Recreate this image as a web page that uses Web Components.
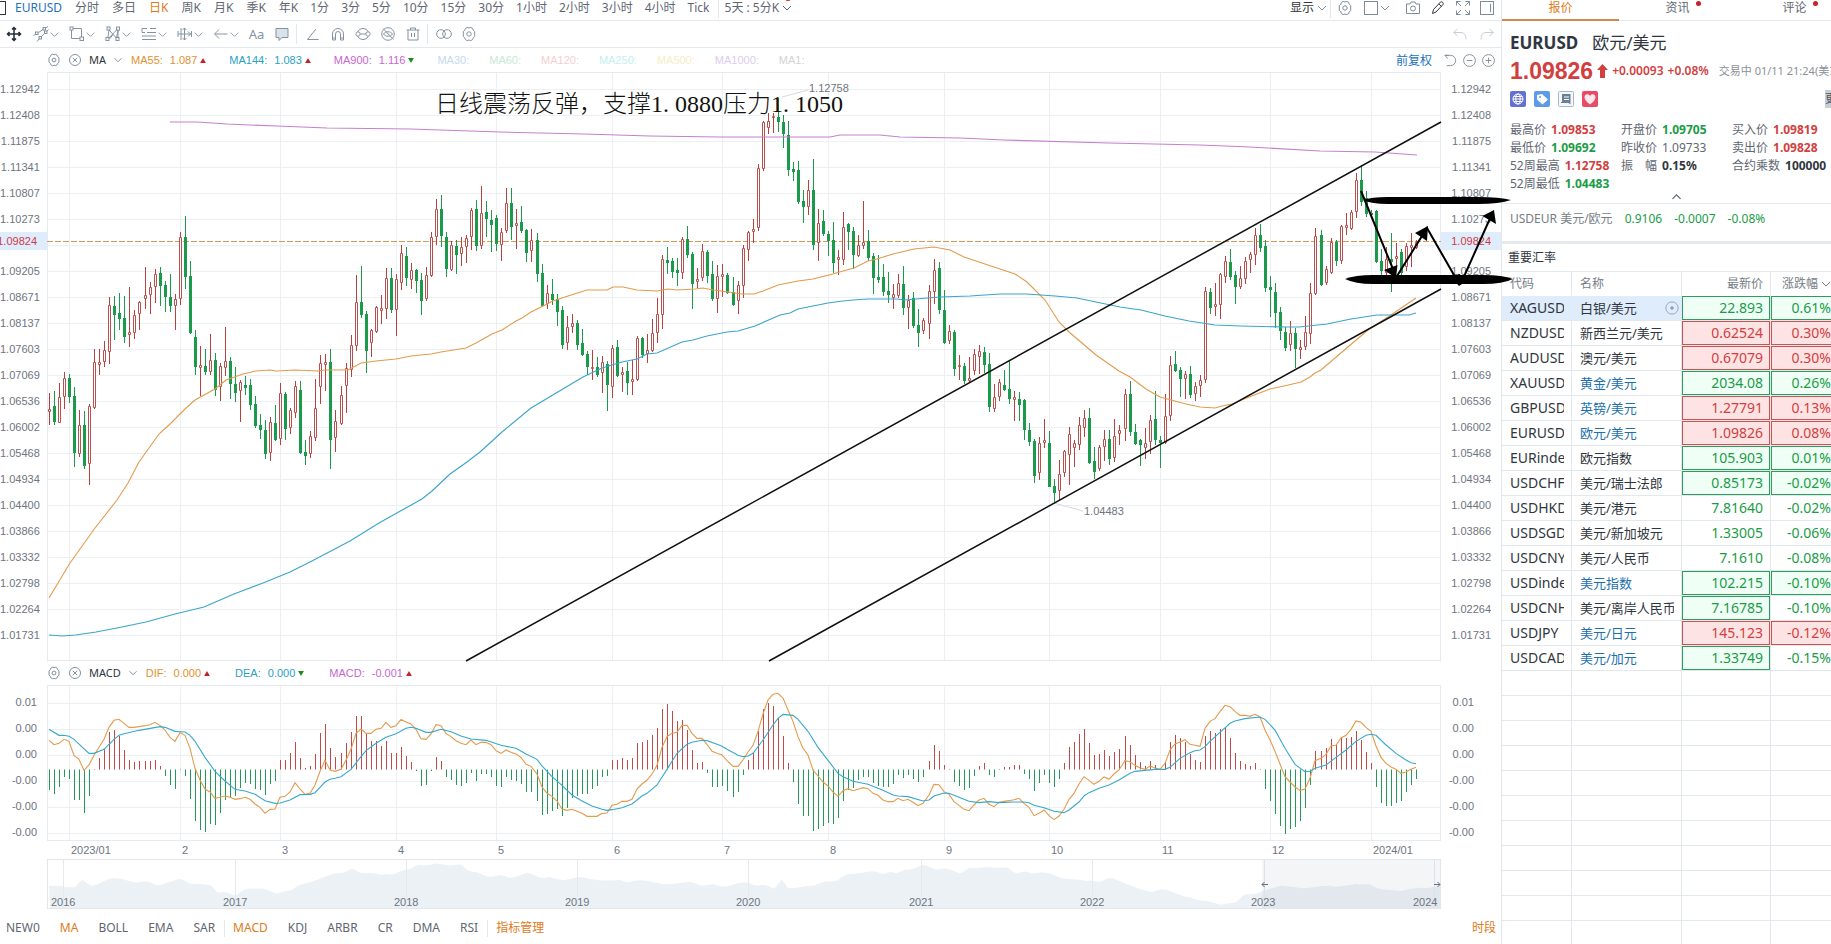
<!DOCTYPE html>
<html lang="zh-CN">
<head>
<meta charset="utf-8">
<title>EURUSD 欧元/美元</title>
<style>
html, body { margin: 0; height: 100%; }
body {
  font: 12px/16px "Noto Sans", "Noto Sans CJK SC", sans-serif;
  color: #5f6773; background: #fff; overflow: hidden;
  --line: #e3e8ed; --grid: #edf0f3; --red: #d23f3f; --green: #1a9c46; --orange: #e07b1a; --blue: #2472bf; --dark: #2f3640;
}
</style>
</head>
<body>
<quote-app></quote-app>
<script>
const BASE = `
  *, *::before { box-sizing: border-box; }
  :host { display: block; }
  button { font: inherit; color: inherit; background: none; border: 0; padding: 0; margin: 0; display: inline-flex; align-items: center; justify-content: center; white-space: nowrap; cursor: pointer; }
`;
function define(name, css, html, init) {
  const tpl = document.createElement('template');
  tpl.innerHTML = `<style>${BASE}${css}</style>${html}`;
  customElements.define(name, class extends HTMLElement {
    constructor() {
      super();
      this.attachShadow({ mode: 'open' }).append(tpl.content.cloneNode(true));
    }
    connectedCallback() { if (init && !this.ready) { this.ready = true; init(this.shadowRoot, this); } }
  });
}

/* ---------- icons ---------- */
const GEAR = '<path d="M6.2 1.4Q8 2.600 9.800 1.400L11.600 2.400Q11.700 4.500 13.700 5.500V8Q13.700 9 13.700 10.500Q11.700 11.500 11.600 13.600L9.800 14.600Q8 13.400 6.200 14.600L4.400 13.600Q4.300 11.500 2.300 10.500V5.500Q4.300 4.500 4.400 2.400z"/><circle cx="8" cy="8" r="2.200"/>';
const ICONS = {
  gear: GEAR,
  close: '<circle cx="8" cy="8" r="6.3"/><path d="M5.5 5.5l5 5m0-5l-5 5"/>',
  move: '<path stroke-width="1.5" d="M8 1.5v13M1.5 8h13M6 3.5l2-2 2 2M6 12.5l2 2 2-2M3.5 6l-2 2 2 2M12.500 6l2 2-2 2"/>',
  lines: '<path d="M.5 9.500L3 8M5.500 6.500L10 3.500M12.500 2L15 .5M4 15.500L6.500 12.500M8.500 10.500L11.500 7.500M13.500 5.500L15.500 3.500"/><rect x="2.500" y="6" width="2.500" height="2.500"/><rect x="10" y="1.500" width="2.500" height="2.500"/><rect x="6" y="10.500" width="2.500" height="2.500"/><rect x="11.500" y="5" width="2.500" height="2.500"/>',
  rect: '<path d="M4 2.500h8.500v8.500M2.500 4v8.500H11"/><rect x="1" y="1" width="3" height="3"/><rect x="11" y="11" width="3.500" height="3.500"/>',
  pattern: '<path d="M3 11L4 4l7.500 8L13 4M3.500 12.500L11.500 4M13 4v8M5 12.500L8 8.500"/><rect x="2" y="1" width="3" height="3"/><rect x="11.500" y="1" width="3" height="3"/><rect x="1" y="11.500" width="3" height="3"/><rect x="11" y="11.500" width="3" height="3"/>',
  fib: '<path d="M1 2.500h5M9 2.500h6M1 2.500v4M6 6.500h9M1 10h14M1 13.500h14M1 6.500h3"/>',
  measure: '<path d="M4 2v12M14.500 5v6M7.500 2v12M1 8h13M1 5v6M11 5.500L13.500 8 11 10.500M5.500 4l2-2 2 2M5.500 12l2 2 2-2"/>',
  arrow: '<path d="M14.500 8H2M6 3.500L1.500 8 6 12.500"/>',
  bubble: '<path fill="#dbe3ea" d="M2 2.500h12v9H8l-3 3v-3H2z"/>',
  angle: '<path d="M13.500 13.500H2.500L11 3"/>',
  magnet: '<path d="M2.500 14V8a5.500 5.500 0 0 1 11 0v6h-3V8a2.500 2.500 0 0 0-5 0v6zM2.500 12h3M10.500 12h3"/>',
  link: '<path d="M2.500 6a6 6 0 0 1 11 0M13.500 10a6 6 0 0 1-11 0M5 8h6"/><rect x="1" y="6" width="4" height="4" rx="1.500"/><rect x="11" y="6" width="4" height="4" rx="1.500"/>',
  eye: '<circle cx="8" cy="8" r="6.300"/><path d="M3.500 8c2-3 7-3 9 0-2 3-7 3-9 0zM3 2.500l10.500 11"/>',
  trash: '<path d="M1.500 4h13M5.500 4V2h5v2M3 4v10h10V4M6.500 7v4M9.500 7v4"/>',
  rings: '<circle cx="5" cy="8" r="4.300"/><circle cx="11" cy="8" r="4.300"/>',
  square: '<rect x="1.500" y="1.500" width="13" height="13"/>',
  camera: '<path d="M1.500 4H5l1-2h4l1 2h3.500v9.500h-13z"/><circle cx="8" cy="8.500" r="2.500"/>',
  pencil: '<path stroke="#2f3640" d="M2.500 13.500l1-4L10.500 2c1-1 3.500 1 2.500 2.500L6 12z M9 4l2.500 2.500"/>',
  expand: '<path d="M1.500 5.500v-4h4M10.500 1.500h4v4M14.500 10.500v4h-4M5.500 14.500h-4v-4M1.500 1.500l4.500 4.500M14.500 1.500L10 6M14.500 14.500L10 10M1.500 14.500L6 10"/>',
  panel: '<rect x="1.500" y="1.500" width="13" height="13"/><path d="M11.500 4v8"/>',
  undo: '<path d="M5.500 3L1.500 6.500 5.500 10M2 6.500h7q5 0 5 7"/>',
  redo: '<path d="M10.500 3l4 3.500-4 3.500M14 6.500H7q-5 0-5 7"/>',
  reset: '<path d="M2 2.500h6a5.300 5.300 0 0 1 0 11H4M2 2.500h4M2 2.500l3 3.500"/>',
  minus: '<circle cx="8" cy="8" r="6.300"/><path d="M5 8h6"/>',
  plus: '<circle cx="8" cy="8" r="6.300"/><path d="M5 8h6M8 5v6"/>',
  chevron: '<path d="M4 6l4 4 4-4"/>',
  up: '<path stroke-width="1.500" d="M3 11L8 6l5 5"/>',
  target: '<circle cx="8" cy="8" r="7"/><circle cx="8" cy="8" r="1.500" fill="currentColor"/>',
  globe: '<rect width="16" height="16" rx="2" fill="#6470d2" stroke="none"/><g stroke="#fff"><circle cx="8" cy="8" r="5"/><ellipse cx="8" cy="8" rx="2.200" ry="5"/><path d="M3 8h10M4 5.500h8M4 10.500h8"/></g>',
  tag: '<rect width="16" height="16" rx="2" fill="#5b9be8" stroke="none"/><path fill="#fff" stroke="none" d="M3 4l5-1 6 5.500-5.500 5L3 8.500z"/><circle cx="6" cy="6" r="1" fill="#5b9be8" stroke="none"/>',
  note: '<rect x=".5" y=".5" width="15" height="15" rx="1" fill="#f5f8fa" stroke="#a9b8c6"/><path fill="#6b8096" stroke="none" d="M4 3h8.500v10.500L10.500 12H3V11h1z"/><path stroke="#fff" d="M6 6h5M6 8.500h5"/>',
  heart: '<rect width="16" height="16" rx="2" fill="#ea4a66" stroke="none"/><path fill="#fde9ec" stroke="none" d="M8 13.500C5 11 2.500 9 2.500 6.200 2.500 3 6.500 2.300 8 5c1.500-2.700 5.500-2 5.500 1.200C13.500 9 11 11 8 13.500z"/>'
};
define('ui-icon', `
  :host { display: inline-block; width: 16px; height: 16px; flex: none; }
  svg { display: block; width: 100%; height: 100%; fill: none; stroke: currentColor; }
`, '<svg viewBox="0 0 16 16" aria-hidden="true"></svg>', (root, el) => {
  root.querySelector('svg').innerHTML = ICONS[el.getAttribute('name')];
});

/* ---------- period tabs ---------- */
define('period-bar', `
  :host { height: 21px; border-bottom: 1px solid var(--line); display: flex; align-items: center; padding-bottom: 5px; }
  .box { width: 6px; height: 14px; border: 1px solid #2f3640; border-left: 0; margin-right: 9px; flex: none; }
  .tabs, .times { display: flex; gap: 13px; flex: none; }
  .times { gap: 12px; margin-left: 12px; }
  .sym { color: var(--blue); }
  .on { color: var(--orange); }
  .sep { width: 1px; height: 20px; background: var(--line); margin: 0 6px 0 8px; }
  .more { position: relative; }
  .dot { position: absolute; right: 4px; top: -5px; width: 6px; height: 6px; border-radius: 50%; background: #d8232a; }
  .right { margin-left: auto; display: flex; align-items: center; padding-right: 6px; color: #7f8b97; }
  .show { color: var(--dark); }
`, `
  <span class="box"></span>
  <nav class="tabs"></nav><nav class="times"></nav>
  <span class="sep"></span>
  <button class="more">5天 : 5分K<ui-icon name="chevron"></ui-icon><i class="dot"></i></button>
  <div class="right">
    <button class="show">显示</button><ui-icon name="chevron"></ui-icon><span class="sep" style="margin:0 6px 0 0"></span>
    <button aria-label="设置"><ui-icon name="gear"></ui-icon></button>
    <button aria-label="布局" style="margin-left:10px"><ui-icon name="square"></ui-icon></button><ui-icon name="chevron" style="margin:0 12px 0 -2px"></ui-icon>
    <button aria-label="截图" style="margin-right:9px"><ui-icon name="camera"></ui-icon></button>
    <button aria-label="画线" style="margin-right:9px"><ui-icon name="pencil"></ui-icon></button>
    <button aria-label="全屏" style="margin-right:8px"><ui-icon name="expand"></ui-icon></button>
    <button aria-label="侧栏"><ui-icon name="panel"></ui-icon></button>
  </div>`, root => {
  const fill = (sel, list) => {
    root.querySelector(sel).innerHTML = list.split(',').map(t => `<button class="${t === 'EURUSD' ? 'sym' : t === '日K' ? 'on' : ''}">${t}</button>`).join('');
  };
  fill('.tabs', 'EURUSD,分时,多日,日K,周K,月K,季K,年K');
  fill('.times', '1分,3分,5分,10分,15分,30分,1小时,2小时,3小时,4小时,Tick');
});

/* ---------- drawing tools ---------- */
define('draw-bar', `
  :host { height: 27px; border-bottom: 1px solid var(--line); display: flex; align-items: center; color: #8593a1; padding-left: 6px; }
  .move { color: #222b36; margin-right: 11px; }
  .grp { width: 36px; justify-content: flex-start; }
  .grp ui-icon + ui-icon { margin-left: -2px; width: 15px; height: 15px; }
  .one { width: 25px; }
  .text { margin-left: -5px; font-size: 13px; }
  .sep { width: 1px; height: 20px; background: var(--line); margin: 0 3px 0 2px; }
  .hist { margin-left: auto; display: flex; gap: 11px; padding-right: 6px; color: #c9ced4; }
`, `
  <button class="move" aria-label="移动"><ui-icon name="move"></ui-icon></button>
  ${['lines', 'rect', 'pattern', 'fib', 'measure', 'arrow'].map(n => `<button class="grp" aria-label="${n}"><ui-icon name="${n}"></ui-icon><ui-icon name="chevron"></ui-icon></button>`).join('')}
  <button class="one text">Aa</button>
  <button class="one" aria-label="注释"><ui-icon name="bubble"></ui-icon></button><span class="sep"></span>
  ${['angle', 'magnet', 'link', 'eye', 'trash'].map(n => `<button class="one" aria-label="${n}"><ui-icon name="${n}"></ui-icon></button>`).join('')}
  <span class="sep"></span>
  <button class="one" aria-label="对比"><ui-icon name="rings"></ui-icon></button>
  <button class="one" aria-label="设置"><ui-icon name="gear"></ui-icon></button>
  <div class="hist"><button aria-label="撤销"><ui-icon name="undo"></ui-icon></button><button aria-label="重做"><ui-icon name="redo"></ui-icon></button></div>`);

/* ---------- indicator legend ---------- */
define('legend-bar', `
  :host { height: 24px; display: flex; align-items: center; padding-left: 47px; font-family: "Liberation Sans", "Noto Sans CJK SC", sans-serif; font-size: 11px; color: #6d8296; }
  ui-icon { width: 14px; height: 14px; }
  .name { color: var(--dark); margin: 0 5px 0 7px; font-family: "Noto Sans", sans-serif; }
  .x { margin-left: 7px; }
  ::slotted(*) { flex: none; }
  .end { margin-left: auto; display: flex; align-items: center; }
`, `<button aria-label="参数"><ui-icon name="gear"></ui-icon></button><button class="x" aria-label="关闭"><ui-icon name="close"></ui-icon></button>
  <span class="name"></span><ui-icon name="chevron"></ui-icon><slot></slot><div class="end"><slot name="end"></slot></div>`,
  (root, el) => { root.querySelector('.name').textContent = el.getAttribute('name'); });

define('legend-item', `
  :host { display: flex; align-items: center; margin-right: 20px; white-space: nowrap; }
  :host([value]) { margin-right: var(--gap, 25px); }
  .v { margin-left: 7px; }
  svg { width: 6px; height: 5px; margin-left: 3px; }
`, '<span class="l"></span>', (root, el) => {
  el.style.color = el.getAttribute('color');
  root.querySelector('.l').textContent = el.getAttribute('label') + ':';
  if (!el.hasAttribute('value')) return;
  const up = el.getAttribute('dir') === 'up';
  root.innerHTML += `<span class="v">${el.getAttribute('value')}</span><svg viewBox="0 0 7 6"><path d="${up ? 'M3.500 0L7 6H0z' : 'M0 0h7L3.500 6z'}" fill="${up ? '#c8202a' : '#1c8a1c'}"/></svg>`;
});

/* ---------- chart data: one entry per bar, in thirds of a unit ---------- */
const barX = i => 49 + i * 5 + Math.floor((i + 20) / 39);
const VLINES = [69, 180, 280, 396, 496, 612, 722, 828, 944, 1049, 1160, 1270, 1371];
/* high, body top, body bottom, low, r(ise) or g(fall) */
const CANDLES = `640,687,695,735r 632,678,726,735g 610,652,728,728r 577,594,652,686r 582,594,650,669g 620,648,818,860g 690,735,821,830r 693,735,857,868g 672,678,853,914r 507,546,684,686r
507,546,554,585r 484,511,545,560r 350,376,515,552r 348,378,404,480g 339,400,416,450g 348,414,471,488g 320,456,464,500r 390,406,460,476r 363,367,403,450r 261,346,358,386r
307,322,346,402r 267,283,322,368r 261,279,318,377g 303,316,351,395g 282,351,378,395g 341,358,377,450r 156,171,356,374r 108,171,291,326g 243,288,458,461g 450,471,561,585g
498,556,563,648r 507,558,576,585g 462,541,575,584r 519,540,629,648g 549,558,622,662r 441,544,563,587r 531,544,613,656g 561,612,638,666g 600,606,634,725r 588,614,624,644g
597,615,674,690g 648,672,738,743g 702,735,749,776g 720,750,821,836g 711,727,818,842r 675,729,780,783g 609,640,776,794r 636,642,746,780g 684,691,745,761r 603,619,700,713r
603,630,818,822g 780,816,827,854g 754,769,821,833r 596,685,773,783r 525,550,620,671r 522,547,555,633r 507,546,779,866g 690,724,775,815r 618,646,731,735r 549,563,617,698r
465,496,569,591r 285,367,497,512r 258,366,404,415g 393,402,513,578g 447,451,488,530r 378,382,455,458r 345,385,392,432r 264,295,386,416r 264,294,389,398g 282,298,389,467r
195,220,308,330r 202,228,293,318g 249,271,299,326r 267,270,304,338g 279,300,362,404g 262,286,358,364r 156,171,287,290r 57,88,170,195r 45,87,167,201g 156,171,266,290g
183,196,269,272r 180,198,224,281g 171,202,223,258r 165,175,202,248r 84,91,170,209r 60,87,197,212g 18,100,197,206r 63,96,117,171g 90,120,134,216g 105,114,192,212g
144,157,196,242r 25,70,154,158r 24,69,140,180g 87,130,139,206r 78,126,153,158g 147,150,218,245g 148,181,214,245r 159,180,282,306g 252,279,377,380g 315,340,372,386r
297,342,359,374g 341,357,395,437g 378,390,494,506g 408,441,490,509r 402,430,440,458r 420,429,494,509g 447,489,524,527g 513,522,560,585g 510,560,566,600r 531,561,585,590g
528,547,580,638r 543,552,614,692g 496,505,620,653r 480,501,587,590g 561,576,584,636r 546,573,608,644g 540,598,605,644r 468,475,599,602r 470,474,524,533g 462,511,523,548r
416,460,512,515r 354,403,458,488r 225,238,404,446r 200,240,248,281g 234,243,276,294g 234,270,279,317g 171,178,278,296r 138,177,225,234g 216,222,312,386g 264,298,307,323r
192,213,293,302r 210,215,288,308g 243,282,357,362g 255,289,356,398r 252,283,290,350r 280,285,338,342g 291,336,375,377g 303,316,364,401r 195,205,317,354r 153,157,211,242r
117,146,157,190r -48,-35,145,152r -177,-173,-33,-28r -202,-176,-156,-139r -200,-192,-185,-140r -246,-189,-175,-144g -195,-174,-138,-97g -177,-134,-31,-13g -54,-33,-25,2g -57,-30,65,71g
30,63,81,128g 0,31,82,104r -63,30,194,210g 87,130,190,242r 90,123,163,167g 152,162,183,227g 126,180,248,278g 211,232,241,286r 96,142,239,254r 129,132,155,210g
141,153,225,266g 165,195,227,231r 63,187,197,206r 150,184,234,243g 219,228,294,341g 226,291,301,308g 252,291,335,347g 276,333,344,368g 312,342,355,386r 282,310,347,354r
258,312,383,404g 345,359,384,446r 336,353,438,443g 387,435,459,501g 415,421,454,461r 315,333,431,476r 237,271,335,371r 246,264,390,402g 330,390,489,492g 435,454,482,492r
450,456,567,587g 525,555,562,600r 549,557,603,613g 531,594,603,605r 507,523,572,584r 495,513,530,581r 501,515,555,580g 519,552,681,697g 612,652,687,696r 598,607,650,663r
570,615,630,633g 543,628,657,671g 633,651,660,722r 635,657,675,722g 657,660,751,779g 730,750,786,799g 777,783,888,909g 772,790,878,901r 717,781,788,803r 753,789,920,920g
898,918,938,970g 840,883,932,960r 810,813,878,890r 741,763,824,914r 781,790,805,860r 711,736,796,809r 690,715,743,771r 684,714,849,852g 801,843,875,896g 796,802,866,874r
750,778,801,842r 750,777,837,854g 717,769,835,847r 735,751,763,794r 627,641,747,784r 603,641,757,767g 733,756,792,796g 777,780,796,858g 744,790,805,836r 706,720,786,821r
633,717,781,796g 769,780,788,863g 643,709,790,792r 527,555,709,723r 513,552,573,576g 561,570,596,650g 573,582,596,658r 558,582,645,654g 607,619,642,662r 585,599,619,650r
322,333,601,609r 325,336,383,403g 309,373,382,409r 280,283,376,416r 228,243,290,308r 207,246,290,301g 273,285,320,373g 259,294,321,328r 231,243,298,311r 217,223,240,280r
145,165,224,255r 132,165,203,217g 181,198,324,335g 288,321,329,410g 309,336,398,445g 382,396,452,481g 441,456,503,514g 424,460,496,514r 444,459,507,563g 481,501,509,536r
409,457,502,509r 310,340,461,492r 145,169,341,344r 150,165,314,319g 259,268,309,316r 175,187,278,283r 180,186,242,259g 135,139,244,252r 99,136,143,166r 90,96,146,150r
-21,1,97,114r -45,1,67,77g 33,55,103,110g 90,100,105,110g 90,93,245,248g 207,244,272,313g 200,238,280,290r 159,237,247,337g 190,229,238,270r 207,216,280,287g
190,198,260,273r 159,195,203,260r 180,187,203,207r`.split(/\s+/).map(s => ({ v: s.slice(0, -1).split(',').map(n => 180 + Math.round(n / 3)), up: s.endsWith('r') }));
const MA55 = '49,598 70,563 95,528 117,500 128,483 139,462 159,434 170,424 185,409 195,400 215,389 226,380 243,374 256,371 270,370 276,371 295,370 318,371 325,370 348,370 361,363 376,361 396,359 411,356 431,354 441,352 466,348 476,343 492,334 502,330 516,321 522,318 531,312 537,309 553,301 568,296 587,290 607,290 613,287 623,287 637,290 657,291 668,289 677,290 695,289 703,288 713,290 728,292 742,294 754,294 763,291 778,285 798,281 813,279 833,274 843,271 854,268 868,261 877,259 893,254 914,249 934,247 950,250 964,257 979,262 1015,274 1027,282 1045,300 1059,322 1069,332 1082,343 1096,355 1119,371 1130,377 1146,389 1160,397 1186,404 1200,407 1215,408 1222,406 1232,404 1249,397 1270,389 1284,386 1301,382 1310,377 1315,373 1321,370 1342,352 1368,330 1391,315 1416,298';
const MA144 = '49,635 62,636 76,635 96,632 117,628 146,622 175,614 204,607 234,594 263,583 290,572 310,562 350,541 379,523 404,509 422,499 432,491 450,474 467,462 480,452 502,432 531,408 583,377 602,368 622,362 637,359 647,354 657,353 682,342 693,340 707,336 727,332 738,331 755,326 780,315 790,313 798,309 808,307 828,303 843,301 853,300 868,299 897,299 905,300 927,298 940,297 970,296 1000,294 1027,294 1055,296 1077,298 1096,302 1120,307 1141,310 1165,316 1189,321 1215,325 1241,326 1286,327 1299,327 1327,324 1351,319 1377,315 1409,315 1416,313';
const MA900 = '170,122 197,122 227,124 250,125 277,126 327,128 410,129 500,132 584,134 650,136 720,137 780,137 830,137 840,135 880,135 900,137 960,138 1004,140 1109,143 1200,145 1250,147 1320,151 1375,152 1417,155';
const HIST = '450 462 441 411 417 480 480 519 468 391 355 328 277 271 289 331 361 367 364 364 364 361 379 408 435 447 391 408 477 543 570 576 552 555 519 480 474 468 444 429 432 447 450 465 432 423 360 361 340 307 355 385 378 343 280 253 325 352 340 310 277 229 229 280 304 304 318 304 340 340 322 349 367 394 437 434 394 352 364 412 420 434 437 428 400 422 402 402 410 438 440 410 420 422 432 456 456 483 525 521 513 508 528 504 474 468 462 462 447 438 411 408 360 360 355 360 355 310 305 301 286 265 208 193 214 244 241 271 331 370 367 399 440 440 438 453 471 456 405 361 340 274 208 190 198 235 289 370 426 492 528 528 573 567 558 549 552 534 483 450 445 420 411 411 430 438 440 440 432 406 414 405 417 426 411 364 316 334 376 388 426 438 450 444 408 378 370 405 411 388 380 380 376 376 402 417 453 429 405 429 441 417 370 322 307 283 268 310 346 343 331 349 337 328 289 316 346 367 378 364 376 388 367 307 286 295 307 343 361 367 289 274 280 268 265 295 340 364 373 379 370 388 447 483 522 558 582 567 561 543 504 435 334 334 325 298 313 292 295 292 274 301 337 370 441 489 498 498 489 483 456 435 417'.split(' ').map(n => 640 + n / 3);
const DIF = '301 314 310 298 304 346 358 391 375 346 322 298 262 241 238 250 262 262 260 257 254 247 256 270 292 304 278 286 325 385 420 447 456 475 472 468 472 478 476 472 478 492 502 520 508 507 472 469 456 428 447 463 460 435 394 361 390 394 388 361 328 280 267 280 280 268 265 247 262 257 238 246 252 268 296 298 282 254 257 280 290 302 310 314 300 314 307 307 314 332 340 330 337 342 352 373 379 402 441 460 469 483 507 511 508 514 520 529 529 529 520 519 496 493 484 484 478 447 432 420 402 376 322 290 280 277 256 256 280 295 295 313 334 340 345 362 379 379 360 336 316 274 222 180 163 160 174 210 244 290 325 345 390 408 426 438 456 469 452 446 452 448 443 446 460 466 480 485 485 475 482 478 487 497 490 465 433 434 455 463 485 496 508 512 495 480 475 493 500 487 484 482 479 475 490 502 527 520 510 527 539 528 508 478 460 432 410 421 433 424 411 418 402 390 362 366 376 384 388 378 384 388 370 330 312 306 299 313 316 319 265 244 236 215 196 200 214 226 226 229 223 231 270 300 334 372 410 426 441 451 447 415 362 355 343 318 316 294 286 268 243 247 262 274 318 352 370 381 388 400 396 388 382'.split(' ').map((n, i) => `${barX(i)},${640 + n / 3}`).join(' ');
const DEA = '0 268,2 286,3 286,4 289,5 298,8 340,9 340,11 328,13 298,14 286,15 281,18 271,22 260,23 262,25 274,27 276,28 286,29 304,31 352,33 394,35 423,37 448,39 453,41 463,43 482,45 490,46 489,48 480,50 464,52 463,53 458,54 442,55 426,56 418,57 415,58 410,60 388,62 350,63 332,65 310,67 292,69 281,71 265,72 262,73 265,75 277,76 277,78 268,80 275,82 288,84 297,87 301,90 316,93 325,95 342,97 358,98 378,100 410,102 436,104 465,106 483,108 498,110 508,111 511,112 509,114 503,116 492,118 468,119 460,121 435,123 388,125 340,127 313,128 307,130 301,131 302,133 313,134 319,135 328,137 346,138 350,139 348,140 340,142 300,144 255,145 235,146 223,148 226,149 238,151 274,153 322,155 361,157 400,158 410,160 424,163 433,166 451,168 465,169 468,171 470,174 483,175 480,176 468,178 459,179 460,181 472,183 484,185 488,187 485,189 488,192 486,194 486,195 488,196 496,198 503,200 514,202 518,203 510,205 486,206 468,207 458,209 445,211 435,213 420,215 400,216 394,220 388,222 388,223 382,225 355,227 338,228 332,229 330,230 320,231 304,233 277,235 250,236 243,238 236,241 231,242 238,244 270,246 325,248 373,250 395,251 394,252 385,254 375,256 352,258 330,260 304,262 286,263 283,264 286,266 315,268 340,270 360,271 368,272 371'
  .split(',').map(p => { const [i, y] = p.split(' ').map(Number); return `${barX(i)},${640 + y / 3}`; }).join(' ');
const HISTORY = '2,27 28,26 35,21 44,25 62,20 74,18 85,21 113,24 133,20 149,24 163,26 170,31 186,35 202,29 216,28 227,32 237,33 250,26 264,23 278,18 287,13 305,10 315,12 326,12 335,16 351,12 365,9 372,4 381,5 386,3 393,5 411,4 418,8 434,15 462,17 480,14 489,16 508,19 544,18 567,21 586,21 618,23 641,23 672,26 702,23 727,28 735,19 741,27 767,27 779,20 791,21 801,13 821,12 836,14 844,12 854,12 864,8 876,6 901,10 913,12 926,8 943,6 961,9 971,13 990,12 1020,18 1040,22 1065,19 1085,25 1105,32 1120,30 1137,35 1145,37 1160,42 1174,46 1189,41 1199,35 1214,31 1234,27 1254,28 1274,25 1289,28 1309,23 1334,28 1354,32 1374,28 1386,26 1394,25'.split(' ').map(p => p.split(',').map(Number));

const vgrid = (y1, y2) => VLINES.map(x => `M${x + .5} ${y1}V${y2}`).join('');

/* ---------- price axis ---------- */
const PRICES = '1.12942 1.12408 1.11875 1.11341 1.10807 1.10273 - 1.09205 1.08671 1.08137 1.07603 1.07069 1.06536 1.06002 1.05468 1.04934 1.04400 1.03866 1.03332 1.02798 1.02264 1.01731'.split(' ');
const AXIS_CSS = `
  :host { position: relative; min-height: 0; font: 11px/12px "Liberation Sans", sans-serif; color: #6e7580; }
  ol { list-style: none; margin: 0; height: 100%; display: grid; grid-auto-rows: 1fr; align-items: center; justify-items: end; padding: 4px 10px 13px 0; }
  .now { position: absolute; left: 0; right: 0; top: 160px; height: 18px; background: #dfecfb; color: #cf3b45; display: flex; align-items: center; justify-content: flex-end; padding-right: 10px; }
`;
define('price-axis', AXIS_CSS, `<ol>${PRICES.map(p => `<li>${p === '-' ? '' : p}</li>`).join('')}</ol><span class="now">1.09824</span>`);
define('macd-axis', AXIS_CSS + `
  ol { padding: 4px 10px 0 0; grid-auto-rows: 26px; align-content: start; }
  :host([side=right]) ol { padding-right: 27px; }
`, `<ol>${['0.01', '0.00', '0.00', '-0.00', '-0.00', '-0.00'].map(p => `<li>${p}</li>`).join('')}</ol>`);

/* ---------- price plot ---------- */
define('price-plot', `
  :host { position: relative; }
  svg { display: block; position: absolute; inset: 0; width: 100%; height: 100%; }
  .over { overflow: visible; z-index: 2; pointer-events: none; }
  .note { position: absolute; left: 388px; top: 18px; margin: 0; z-index: 2; color: #111; font: 300 24px/28px "Liberation Serif", "Noto Sans CJK SC", sans-serif; white-space: nowrap; }
  .note i { display: inline-block; width: 12px; font-style: normal; }
  text { font: 11px "Liberation Sans", sans-serif; fill: #6e7580; }
`, `<svg class="plot" viewBox="47 72 1394 589" preserveAspectRatio="none"></svg>
  <p class="note">日线震荡反弹，支撑1<i>.</i>0880压力1<i>.</i>1050</p>
  <svg class="over" viewBox="47 72 1394 589" preserveAspectRatio="none">
    <g stroke="#111" stroke-width="1.500" fill="none"><path d="M466 661L1441 122M769 661L1441 289"/></g>
    <g fill="#000">
      <path d="M1363 200q8-3 25-3h90q22 0 33 3-11 4-33 4h-90q-17 0-25-4z"/>
      <path d="M1345 279q10-4 28-4h110q20 0 30 4-10 5-30 5h-110q-18 0-28-5z"/>
      <path stroke="#000" stroke-width="2" fill="none" d="M1361 191L1395 274M1397 276L1427 228L1458 282M1462 281L1492 214"/>
      <path d="M1384 270l13.500-5-1.500 13zM1428 226l-13 7 12 8zM1450 276l10-2 2 10-3 2zM1494 210l-11.500 6 13.500 8z"/>
    </g>
  </svg>`, root => {
  let grid = '', up = '', down = '', wickUp = '';
  for (let k = 0; k < 22; k++) grid += `M47 ${89.5 + 26 * k}H1441`;
  CANDLES.forEach(({ v: [h, t, b, l], up: rise }, i) => {
    const x = barX(i), e = Math.max(b, t + 2);
    if (rise) {
      wickUp += `M${x + .5} ${h}V${t}M${x + .5} ${e}V${l}`;
      up += `M${x - .5} ${t + .5}h2V${e - .5}h-2z`;
    } else {
      down += `M${x} ${h}h1V${l}h-1zM${x - 1} ${t}h3V${e}h-3z`;
    }
  });
  root.querySelector('.plot').innerHTML = `
    <path d="${grid}${vgrid(72, 661)}" stroke="#edf0f3" fill="none"/>
    <rect x="47.500" y="72.500" width="1393" height="588" fill="none" stroke="#e6eaee"/>
    <path d="M47 241.500H1441" stroke="#d99a55" stroke-dasharray="6 2"/>
    <path d="${wickUp}" stroke="#b5423f"/><path d="${up}" stroke="#b8504d" fill="#fff"/><path d="${down}" fill="#1c9a4b"/>
    <g fill="none" stroke-width="1.100"><polyline points="${MA900}" stroke="#c77fce"/><polyline points="${MA55}" stroke="#e39b4c"/><polyline points="${MA144}" stroke="#3aa5c9"/></g>
    <path d="M782 97L808 90M1054 503L1083 511" stroke="#d5dae0"/>
    <text x="809" y="92">1.12758</text><text x="1084" y="515">1.04483</text>`;
});

/* ---------- MACD plot ---------- */
define('macd-plot', `:host { min-height: 0; } svg { display: block; width: 100%; height: 100%; }`,
  '<svg viewBox="47 685 1394 156" preserveAspectRatio="none"></svg>', root => {
  let grid = '', up = '', down = '';
  for (let k = 0; k < 6; k++) grid += `M47 ${703.5 + 26 * k}H1441`;
  HIST.forEach((y, i) => {
    const s = `M${barX(i) + .5} 769.500V${Math.round(y)}`;
    if (y < 769) up += s; else down += s;
  });
  root.querySelector('svg').innerHTML = `
    <path d="${grid}${vgrid(685, 841)}" stroke="#edf0f3"/>
    <rect x="47.500" y="685.500" width="1393" height="155" fill="none" stroke="#e6eaee"/>
    <path d="${up}" stroke="#bf4a48"/><path d="${down}" stroke="#26995a"/>
    <polyline points="${DIF}" fill="none" stroke="#e39b4c" stroke-width="1.100"/><polyline points="${DEA}" fill="none" stroke="#38a9cc" stroke-width="1.100"/>`;
});

/* ---------- month labels ---------- */
define('month-row', `
  :host { display: grid; grid-template-columns: 22fr 111fr 100fr 116fr 100fr 116fr 110fr 106fr 116fr 105fr 111fr 110fr 101fr 70fr; align-items: center; font: 11px/12px "Liberation Sans", sans-serif; color: #6e7580; }
  span { min-width: 0; padding-left: 2px; white-space: nowrap; }
`, ['', '2023/01', 2, 3, 4, 5, 6, 7, 8, 9, 10, 11, 12, '2024/01'].map(m => `<span>${m}</span>`).join(''));

/* ---------- range navigator ---------- */
define('range-nav', `
  :host { position: relative; }
  svg { position: absolute; inset: 0; width: 100%; height: 100%; }
  div { position: relative; height: 100%; display: grid; grid-template-columns: 4fr 172fr 171fr 171fr 171fr 173fr 171fr 171fr 162fr 28fr; align-items: end; padding-bottom: 1px; font: 11px/12px "Liberation Sans", sans-serif; color: #6e7580; }
  span { min-width: 0; white-space: nowrap; }
`, `<svg viewBox="47 859 1394 50" preserveAspectRatio="none"></svg><div><span></span>${[2016, 2017, 2018, 2019, 2020, 2021, 2022, 2023, 2024].map(y => `<span>${y}</span>`).join('')}</div>`, root => {
  let d = 'M50 909';
  HISTORY.forEach(([x, y], i) => {
    const [px, py] = HISTORY[i - 1] || [x, y];
    const n = Math.max(1, Math.round((x - px) / 3));
    for (let k = 1; k <= n; k++) {
      const cx = px + (x - px) * k / n;
      d += `L${(47 + cx).toFixed(1)} ${(860 + py + (y - py) * k / n + Math.sin(cx * 2.3) * 1.2).toFixed(1)}`;
    }
  });
  root.querySelector('svg').innerHTML = `
    <path d="${d}V909z" fill="#ecf1f6"/>
    <path d="${[63, 235, 406, 577, 748, 921, 1092, 1264, 1434].map(x => `M${x + .5} 860V908`).join('')}" stroke="#e6eaee"/>
    <rect x="1262" y="860" width="179" height="49" fill="#8a99aa" fill-opacity=".1"/>
    <rect x="47.500" y="859.500" width="1393" height="49" fill="none" stroke="#e3e7eb"/>
    <path d="M1262 884.500h6M1264.500 882l-2.500 2.500 2.500 2.500M1434 884.500h6M1437.500 882l2.500 2.500-2.500 2.500" stroke="#5c6f86" fill="none"/>`;
});

/* ---------- indicator tabs ---------- */
define('indicator-tabs', `
  :host { height: 35px; display: flex; align-items: center; padding: 3px 5px 0 6px; }
  button { margin-right: 20px; }
  .on { color: var(--orange); }
  .sep { width: 1px; height: 17px; background: var(--line); margin: 0 8px 0 -11px; }
  .last { margin: 0 0 0 auto; }
`, `${['NEW0', 'MA*', 'BOLL', 'EMA', 'SAR', '|', 'MACD*', 'KDJ', 'ARBR', 'CR', 'DMA', 'RSI', '|', '指标管理*'].map(t => t === '|' ? '<span class="sep"></span>' : `<button class="${t.endsWith('*') ? 'on' : ''}">${t.replace('*', '')}</button>`).join('')}<button class="last on">时段</button>`);

/* ---------- quote panel ---------- */
define('quote-head', `
  :host { overflow: hidden; }
  nav { display: flex; height: 21px; border-bottom: 1px solid var(--line); }
  nav button { flex: 0 0 117px; height: 21px; padding-bottom: 6px; position: relative; }
  nav .on { color: var(--orange); border-bottom: 2px solid #cf8a4b; padding-bottom: 4px; }
  nav i { position: absolute; left: 77px; top: 1px; width: 5px; height: 5px; border-radius: 50%; background: #c8202a; }
  .row { display: flex; align-items: center; padding-left: 8px; white-space: nowrap; }
  .row > * { flex: none; }
  h1 { margin: 5px 0 0; height: 34px; font-size: 17px; line-height: 20px; color: var(--dark); gap: 14px; font-weight: 400; }
  h1 b { font-weight: 700; }
  .price { height: 22px; color: var(--red); gap: 4px; font-weight: 600; }
  .price strong { font: 700 23px/22px "Liberation Sans", sans-serif; }
  .price small { font-size: 11px; font-weight: 400; color: #8b919a; margin-left: 6px; }
  .icons { height: 34px; gap: 8px; }
  .icons span { margin-left: auto; width: 6px; height: 18px; background: #c9ced6; color: #4b5563; overflow: hidden; line-height: 18px; }
  dl { margin: 0; padding: 5px 0 0 8px; display: grid; grid-template-columns: 111px 111px 1fr; grid-auto-rows: 18px; }
  dl div { display: flex; gap: 5px; align-items: center; white-space: nowrap; }
  dd { margin: 0; font-weight: 700; }
  .r { color: var(--red); } .g { color: var(--green); } .k { color: var(--dark); } .n { font-weight: 400; }
  .fold { display: flex; justify-content: center; width: 348px; height: 10px; align-items: center; }
  .fold ui-icon { width: 13px; height: 13px; margin-top: -3px; }
  .pair { height: 38px; border-top: 1px solid var(--line); padding-bottom: 8px; gap: 12px; color: #767d87; }
  .pair b { font-weight: 400; color: var(--green); }
`, `
  <nav><button class="on">报价</button><button>资讯<i></i></button><button>评论<i></i></button></nav>
  <h1 class="row"><b>EURUSD</b><span>欧元/美元</span></h1>
  <div class="row price"><strong>1.09826</strong><svg width="11" height="14" viewBox="0 0 11 14"><path d="M5.500 0L11 6H8v8H3V6H0z" fill="#d23f3f"/></svg><span>+0.00093</span><span>+0.08%</span><small>交易中 01/11 21:24(美东)</small></div>
  <div class="row icons"><ui-icon name="globe"></ui-icon><ui-icon name="tag"></ui-icon><ui-icon name="note"></ui-icon><ui-icon name="heart"></ui-icon><span>更</span></div>
  <dl>
    <div><dt>最高价</dt><dd class="r">1.09853</dd></div><div><dt>开盘价</dt><dd class="g">1.09705</dd></div><div><dt>买入价</dt><dd class="r">1.09819</dd></div>
    <div><dt>最低价</dt><dd class="g">1.09692</dd></div><div><dt>昨收价</dt><dd class="n">1.09733</dd></div><div><dt>卖出价</dt><dd class="r">1.09828</dd></div>
    <div><dt>52周最高</dt><dd class="r">1.12758</dd></div><div><dt>振&#12288;幅</dt><dd class="k">0.15%</dd></div><div><dt>合约乘数</dt><dd class="k">100000</dd></div>
    <div><dt>52周最低</dt><dd class="g">1.04483</dd></div>
  </dl>
  <button class="fold" aria-label="收起"><ui-icon name="up"></ui-icon></button>
  <div class="row pair"><span>USDEUR 美元/欧元</span><b>0.9106</b><b>-0.0007</b><b>-0.08%</b></div>`);

const RATES = [
  ['XAGUSD', '白银/美元', '22.893', '0.61%', 'g', 'GG', 0], ['NZDUSD', '新西兰元/美元', '0.62524', '0.30%', 'r', 'RR', 0], ['AUDUSD', '澳元/美元', '0.67079', '0.30%', 'r', 'RR', 0],
  ['XAUUSD', '黄金/美元', '2034.08', '0.26%', 'g', 'GG', 1], ['GBPUSD', '英镑/美元', '1.27791', '0.13%', 'r', 'RR', 1], ['EURUSD', '欧元/美元', '1.09826', '0.08%', 'r', 'RR', 1],
  ['EURindex', '欧元指数', '105.903', '0.01%', 'g', 'GG', 0], ['USDCHF', '美元/瑞士法郎', '0.85173', '-0.02%', 'g', 'GG', 0], ['USDHKD', '美元/港元', '7.81640', '-0.02%', 'g', '--', 0],
  ['USDSGD', '美元/新加坡元', '1.33005', '-0.06%', 'g', '--', 0], ['USDCNY', '美元/人民币', '7.1610', '-0.08%', 'g', '--', 0], ['USDindex', '美元指数', '102.215', '-0.10%', 'g', 'GG', 1],
  ['USDCNH', '美元/离岸人民币', '7.16785', '-0.10%', 'g', 'G-', 0], ['USDJPY', '美元/日元', '145.123', '-0.12%', 'r', 'RR', 1], ['USDCAD', '美元/加元', '1.33749', '-0.15%', 'g', 'G-', 1]
];
define('rate-table', `
  h2 { margin: 0; height: 31px; border-top: 3px solid #e6e9ee; border-bottom: 1px solid var(--line); font-size: 12px; line-height: 27px; font-weight: 400; color: var(--dark); padding-left: 6px; }
  table { width: 100%; border-collapse: separate; border-spacing: 0; table-layout: fixed; }
  th, td { height: 25px; padding: 0; border-right: 1px solid var(--line); border-bottom: 1px solid var(--line); text-align: left; font-weight: 400; white-space: nowrap; overflow: hidden; }
  th { height: 24px; border-bottom-color: transparent; color: #767d87; }
  th:last-child, td:last-child { border-right: 0; }
  .code, .name { padding-left: 8px; }
  td.code { font-size: 14px; color: var(--dark); padding-right: 7px; }
  td.code div { overflow: hidden; height: 20px; line-height: 20px; }
  td.name { font-size: 13px; color: var(--dark); padding-right: 7px; }
  td.name div { display: flex; align-items: center; justify-content: space-between; overflow: hidden; }
  td.name ui-icon { width: 14px; height: 14px; color: #8aa0b8; }
  td.name.link { color: #1c70ad; }
  .sel td.code, .sel td.name { background: #dfecfb; border-right-color: #dfecfb; }
  .sel td.name { padding-right: 2px; }
  .num { text-align: right; }
  th.num { padding-right: 7px; }
  th.pct { padding: 0 0 0 11px; }
  th.pct span { display: flex; align-items: center; }
  td.num { font-size: 14px; }
  td.num div { height: 24px; line-height: 22px; border: 1px solid transparent; padding-right: 6px; }
  td.pct div { border-right: 0; padding-right: 0; }
  td.num .G { background: #f0fff6; border-color: #2e9c5c; }
  td.num .R { background: #fde3e3; border-color: #c85454; }
  .g { color: var(--green); } .r { color: var(--red); }
`, `<h2>重要汇率</h2><table><colgroup><col style="width:70px"><col style="width:110px"><col style="width:89px"><col></colgroup>
  <thead><tr><th class="code">代码</th><th class="name">名称</th><th class="num">最新价</th><th class="pct"><span>涨跌幅<ui-icon name="chevron"></ui-icon></span></th></tr></thead>
  <tbody>${RATES.map(([c, n, p, q, d, box, link], i) => `<tr class="${i ? '' : 'sel'}"><td class="code"><div>${c}</div></td><td class="name${link ? ' link' : ''}"><div>${n}${i ? '' : '<ui-icon name="target"></ui-icon>'}</div></td><td class="num ${d}"><div class="${box[0]}">${p}</div></td><td class="num pct ${d}"><div class="${box[1]}">${q}</div></td></tr>`).join('')}
  ${'<tr><td></td><td></td><td></td><td></td></tr>'.repeat(11)}</tbody></table>`);

/* ---------- application ---------- */
define('quote-app', `
  :host { display: grid; grid-template-columns: minmax(0, 1fr) 330px; grid-template-rows: minmax(0, 1fr); height: 100vh; overflow: hidden; }
  main { display: grid; grid-template-rows: auto auto auto minmax(400px, 1fr) auto 156px 18px 50px auto; min-width: 0; }
  .band { display: grid; grid-template-columns: 47px minmax(0, 1fr) 60px; grid-template-rows: minmax(0, 1fr); min-height: 0; }
  aside { border-left: 1px solid var(--line); overflow: hidden; min-width: 0; }
  .mid { grid-column: 2; }
  .ma { --gap: 23px; }
  .first { margin-left: 6px; }
  .adj { color: var(--blue); font: 12px/16px "Noto Sans CJK SC", sans-serif; margin-right: 11px; }
  legend-bar ui-icon { margin-right: 4px; width: 15px; height: 15px; color: #828d99; }
  .zoom { display: flex; align-items: center; padding-right: 1px; }
`, `
  <main>
    <period-bar></period-bar>
    <draw-bar></draw-bar>
    <legend-bar name="MA" class="ma">
      <legend-item class="first" label="MA55" value="1.087" dir="up" color="#e0922f"></legend-item>
      <legend-item label="MA144" value="1.083" dir="up" color="#2a9fc4"></legend-item>
      <legend-item label="MA900" value="1.116" dir="down" color="#c667cc"></legend-item>
      <legend-item label="MA30" color="#c5d9ee"></legend-item><legend-item label="MA60" color="#c8e8d4"></legend-item>
      <legend-item label="MA120" color="#f4cfcf"></legend-item><legend-item label="MA250" color="#c2eff2"></legend-item>
      <legend-item label="MA500" color="#f8edc6"></legend-item><legend-item label="MA1000" color="#dccbee"></legend-item>
      <legend-item label="MA1" color="#d2d2d2"></legend-item>
      <div slot="end" class="zoom"><button class="adj">前复权</button><ui-icon name="reset"></ui-icon><ui-icon name="minus"></ui-icon><ui-icon name="plus"></ui-icon></div>
    </legend-bar>
    <div class="band"><price-axis></price-axis><price-plot></price-plot><price-axis side="right"></price-axis></div>
    <legend-bar name="MACD">
      <legend-item class="first" label="DIF" value="0.000" dir="up" color="#e0922f"></legend-item>
      <legend-item label="DEA" value="0.000" dir="down" color="#2a9fc4"></legend-item>
      <legend-item label="MACD" value="-0.001" dir="up" color="#c667cc"></legend-item>
    </legend-bar>
    <div class="band"><macd-axis></macd-axis><macd-plot></macd-plot><macd-axis side="right"></macd-axis></div>
    <div class="band"><month-row class="mid"></month-row></div>
    <div class="band"><range-nav class="mid"></range-nav></div>
    <indicator-tabs></indicator-tabs>
  </main>
  <aside><quote-head></quote-head><rate-table></rate-table></aside>`);
</script>
</body>
</html>
